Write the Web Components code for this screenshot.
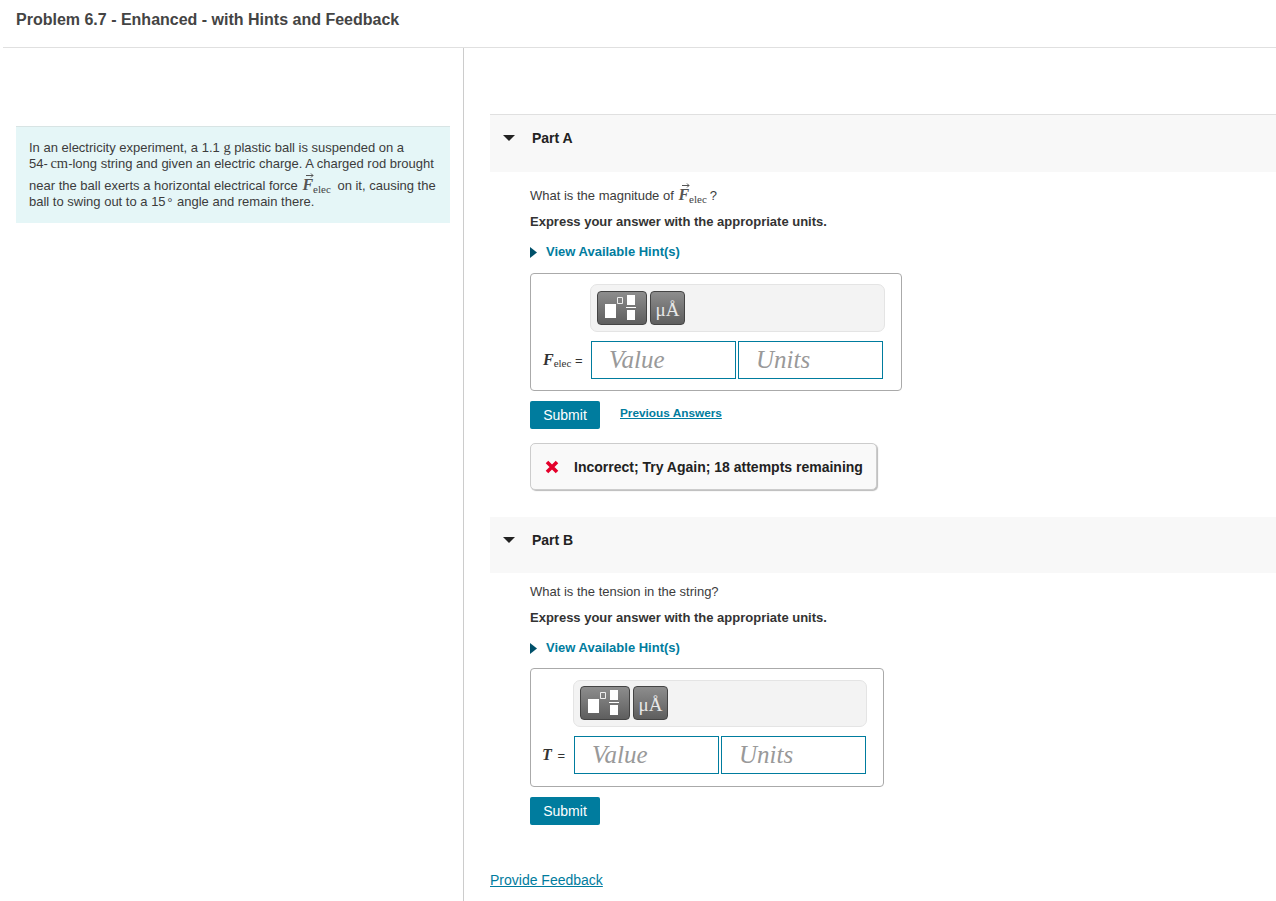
<!DOCTYPE html>
<html>
  <head>
    <meta charset="utf-8">
    <title>Problem 6.7</title>
    <style>
      html, body { margin: 0; padding: 0; background: #fff; }
      body { font: 13px/16px "Liberation Sans", Arial, sans-serif; color: #3c3c3c; }
    </style>
  </head>
  <body>
    <problem-page>
      <span slot="title">Problem 6.7 - Enhanced - with Hints and Feedback</span>

      <intro-box slot="intro">In an electricity experiment, a 1.1 <serif-unit>g</serif-unit> plastic ball is suspended on a <span style="white-space:nowrap">54-<serif-unit class="cm">cm</serif-unit>-long</span> string and given an electric charge. A charged rod brought near the ball exerts a horizontal electrical force <vector-f></vector-f> on it, causing the ball to swing out to a 15<serif-unit class="deg">°</serif-unit> angle and remain there.</intro-box>

      <part-section name="Part A">
        <span slot="question">What is the magnitude of <vector-f></vector-f>?</span>
        <answer-box indent="60" width="372" style="--gap:13px;--label-w:60px;--top:10px;--bottom:11px;--bar-h:48px;--bar-pad:6px">
          <span slot="label"><math-label sym="F" sub="elec"></math-label></span>
        </answer-box>
        <submit-row previous></submit-row>
        <feedback-box>Incorrect; Try Again; 18 attempts remaining</feedback-box>
      </part-section>

      <part-section name="Part B" second>
        <span slot="question">What is the tension in the string?</span>
        <answer-box indent="43" width="354" style="--gap:12px;--label-w:43px;--top:11px;--bottom:12px;--bar-h:47px;--bar-pad:5px">
          <span slot="label"><math-label sym="T"></math-label></span>
        </answer-box>
        <submit-row></submit-row>
      </part-section>

      <a slot="footer" href="#" style="color:#007c9e">Provide Feedback</a>
    </problem-page>

    <script>
      (function masteringPage(document, customElements) {
        'use strict';

        const TEAL = '#007c9e';

        // small helper, every element just sets its shadow html once
        function define(name, html) {
          customElements.define(name, class extends HTMLElement {
            constructor() {
              super();
              this.attachShadow({mode: 'open'}).innerHTML = typeof html === 'function' ? html(this) : html;
            }
          });
        }

        define('problem-page', `
          <style>
            :host { display: block; width: 1276px; height: 901px; overflow: hidden; }
            .title { height: 47px; margin-left: 3px; padding-left: 13px;
                     border-bottom: 1px solid #e0e0e0; font-size: 16px; font-weight: bold; line-height: 39px; color: #444; }
            .cols { display: grid; grid-template-columns: 464px 1fr; height: 853px; }
            .left { border-right: 1px solid #ccc; padding: 78px 13px 0 16px; }
            .right { padding: 66px 0 0 26px; }
            .footer { font-size: 14px; line-height: 16px; }
          </style>
          <div class="title"><slot name="title"></slot></div>
          <div class="cols">
            <div class="left"><slot name="intro"></slot></div>
            <div class="right">
              <slot></slot>
              <div class="footer"><slot name="footer"></slot></div>
            </div>
          </div>`);

        define('intro-box', `
          <style>
            :host { display: block; box-sizing: border-box; height: 97px; padding: 13px 14px 0 13px;
                    background: #e5f6f7; border-top: 1px solid #d8e4e4; font-size: 13px; line-height: 16px; color: #3c3c3c; }
          </style>
          <slot></slot>`);

        define('serif-unit', `
          <style>
            :host { font-family: "Liberation Serif", "DejaVu Serif", serif; font-size: 14.500px; line-height: 0; }
            :host(.cm) { margin-left: -1px; }
            :host(.deg) { font-size: 12px; margin: 0 1px 0 -1px; }
          </style>
          <slot></slot>`);

        // F with an arrow on top and "elec" underneath
        define('vector-f', `
          <style>
            :host { display: inline-block; position: relative; padding-top: 5px; font-family: "Liberation Serif", serif;
                    line-height: 16px; margin: 0 3px 0 1px; }
            i { font-size: 16px; font-weight: bold; color: #555; }
            sub { font-size: 11px; line-height: 0; vertical-align: -3px; color: #444; }
            svg { position: absolute; left: 4px; top: 1px; }
          </style>
          <svg width="8" height="5" viewBox="0 0 8 5"><path d="M0 2.500h7M5 .5l2 2-2 2" fill="none" stroke="#555"/></svg>
          <i>F</i><sub>elec</sub>`);

        define('math-label', el => `
          <style>
            :host { display: inline-block; color: #333; white-space: nowrap; }
            :host([sym="T"]) { margin-left: -1px; }
            i { font: italic bold 16px "Liberation Serif", serif; }
            sub { font: 11px "Liberation Serif", serif; line-height: 0; vertical-align: -2px; }
            span { font-size: 13px; }
            :host([sym="T"]) span { margin-left: 2px; }
          </style>
          <i>${el.getAttribute('sym')}</i>${el.hasAttribute('sub') ? `<sub>${el.getAttribute('sub')}</sub>` : ''}<span> =</span>`);

        define('part-section', el => `
          <style>
            :host { display: block; }
            :host([second]) { margin-top: 27px; }
            .head { display: flex; align-items: flex-start; height: 56px; padding: 15px 0 0 13px; box-sizing: border-box;
                    background: #f8f8f8; font-size: 14px; font-weight: bold; line-height: 16px; color: #222; }
            :host(:not([second])) .head { border-top: 1px solid #e0e0e0; height: 58px; }
            .head svg { margin: 5px 17px 0 0; flex: none; }
            .body { padding: 10px 0 0 40px; }
            :host([second]) .body { padding-bottom: 47px; }
            .q { line-height: 18px; min-height: 18px; color: #3c3c3c; }
            .express { margin-top: 9px; font-weight: bold; line-height: 16px; color: #333; }
            .hint { display: flex; align-items: center; gap: 9px; margin-top: 14px; height: 16px; font-weight: bold; color: ${TEAL}; }
          </style>
          <div class="head">
            <svg width="12" height="6" viewBox="0 0 12 6"><path d="M0 0h12L6 6z" fill="#222"/></svg>
            <span>${el.getAttribute('name')}</span>
          </div>
          <div class="body">
            <div class="q"><slot name="question"></slot></div>
            <div class="express">Express your answer with the appropriate units.</div>
            <div class="hint">
              <svg width="7" height="11" viewBox="0 0 7 11"><path d="M0 0l7 5.500L0 11z" fill="#00506a"/></svg>
              <span>View Available Hint(s)</span>
            </div>
            <slot></slot>
          </div>`);

        define('tool-button', `
          <style>
            :host { display: flex; align-items: center; justify-content: center; box-sizing: border-box; height: 34px;
                    border: 1px solid #444; border-radius: 4px; background: linear-gradient(#8d8d8d, #5e5e5e);
                    color: #e8e8e8; font: 19px "Liberation Serif", serif; }
            :host(.units) { padding-top: 4px; }
          </style>
          <slot></slot>`);

        define('answer-field', `
          <style>
            :host { display: flex; align-items: center; box-sizing: border-box; width: 145px; height: 38px;
                    border: 1px solid ${TEAL}; padding-left: 17px; background: #fff;
                    font: italic 25px "Liberation Serif", serif; color: #999; }
          </style>
          <slot></slot>`);

        define('answer-box', el => `
          <style>
            :host { display: block; box-sizing: border-box; width: ${el.getAttribute('width')}px; margin-top: var(--gap);
                    padding: var(--top) 16px var(--bottom) 0;
                    border: 1px solid #aaa; border-radius: 4px; background: #fff; }
            .bar { display: flex; gap: 3px; box-sizing: border-box; height: var(--bar-h); margin-left: ${el.getAttribute('indent') - 1}px;
                   padding: var(--bar-pad) 6px; background: #f3f3f3; border: 1px solid #e4e4e4; border-radius: 7px; }
            .row { display: flex; align-items: center; margin-top: 9px; }
            .label { box-sizing: border-box; width: var(--label-w); padding-left: 12px; flex: none; }
            .fields { display: flex; gap: 2px; }
          </style>
          <div class="bar">
            <tool-button style="width:50px">
              <svg width="48" height="32" viewBox="0 0 48 32">
                <path d="M7 12h11v14H7zM29 3h8v10h-8zM29 18h8v10h-8z" fill="#fff"/>
                <path d="M19.500 5.500h5v6h-5z" fill="none" stroke="#eee"/>
                <path d="M28 15.500h10" stroke="#fff"/>
              </svg>
            </tool-button>
            <tool-button class="units" style="width:35px">μÅ</tool-button>
          </div>
          <div class="row">
            <div class="label"><slot name="label"></slot></div>
            <div class="fields"><answer-field>Value</answer-field><answer-field>Units</answer-field></div>
          </div>`);

        define('submit-row', el => `
          <style>
            :host { display: flex; align-items: flex-start; gap: 20px; margin-top: 10px; }
            a { display: block; width: 70px; height: 28px; background: ${TEAL}; color: #fff; border-radius: 2px;
                font-size: 14px; line-height: 28px; text-align: center; }
            .prev { margin-top: 4px; font-size: 11.800px; font-weight: bold; line-height: 16px; color: ${TEAL}; text-decoration: underline; }
          </style>
          <a>Submit</a>${el.hasAttribute('previous') ? '<span class="prev">Previous Answers</span>' : ''}`);

        define('feedback-box', `
          <style>
            :host { display: flex; align-items: center; gap: 15px; box-sizing: border-box; width: 347px; height: 47px; margin-top: 14px;
                    padding-left: 14px; border: 1px solid #ccc; border-radius: 5px; background: #f9f9f9;
                    box-shadow: 1px 1px 1px #bbb; font-weight: bold; font-size: 14px; color: #222; white-space: nowrap; }
            svg { flex: none; }
          </style>
          <svg width="14" height="14" viewBox="0 0 14 14"><path d="M2 2l10 10M12 2L2 12" stroke="#e4002b" stroke-width="3.600"/></svg>
          <slot></slot>`);
      })(document, window.customElements);
    </script>
  </body>
</html>
